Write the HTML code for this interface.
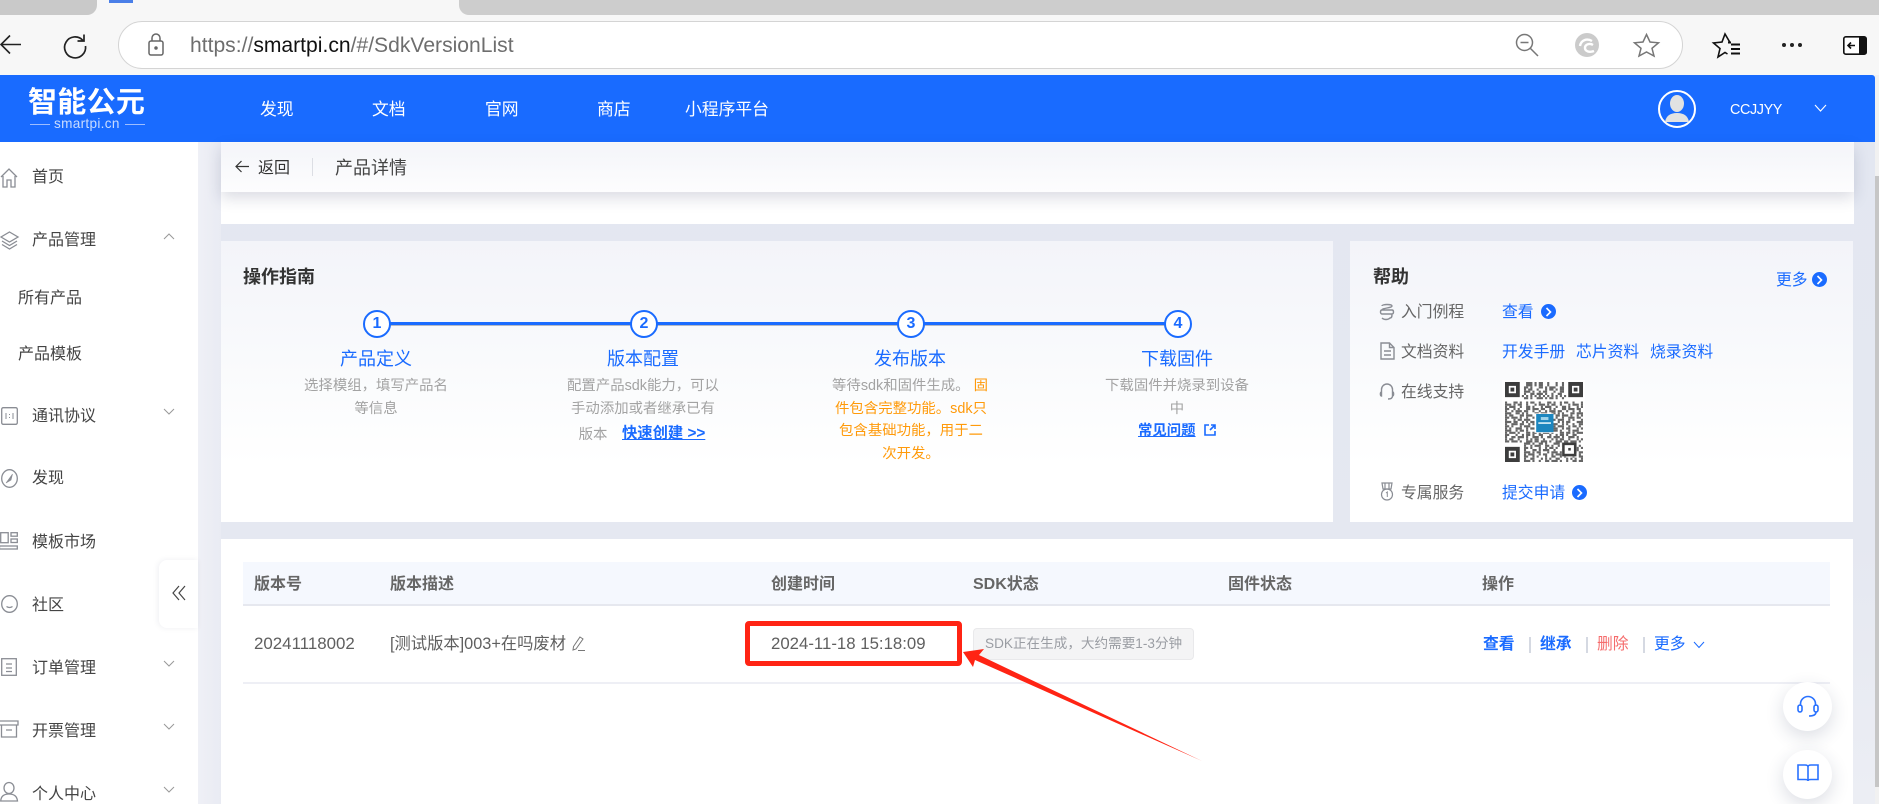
<!DOCTYPE html>
<html lang="zh"><head><meta charset="utf-8"><title>SdkVersionList</title>
<style>
*{box-sizing:border-box}
html,body{margin:0;padding:0;width:1879px;height:804px;overflow:hidden;background:#f7f7f7}
body{font-family:"Liberation Sans","Noto Sans CJK SC",sans-serif;position:relative;color:#333}
.a{position:absolute}
.t{position:absolute;white-space:nowrap;line-height:24px;height:24px}
.c{transform:translateX(-50%);font-size:14.4px;color:#a3a3a3}
.st{transform:translateX(-50%);font-size:18px;color:#1a6bff}
.o{color:#ff9a0a}
.b{color:#1a6bff}
.s{font-size:16px;color:#444}
.n{font-size:16.8px;color:#fff;top:98px}
.h{font-size:16px;color:#666;font-weight:700;top:573px}
.l{font-size:15.8px;color:#666}
.k{font-size:15.8px;color:#1a6bff}
.card{position:absolute;background:linear-gradient(180deg,#f3f4f9 0%,#fbfcfd 55%,#fff 80%)}
.step{position:absolute;top:310px;width:28px;height:28px;border:2.5px solid #1a6bff;border-radius:50%;background:#fff;color:#1a6bff;font-weight:700;font-size:16px;line-height:23px;text-align:center}
.dot{position:absolute;width:15px;height:15px;border-radius:50%;background:#1a6bff}
svg{position:absolute;overflow:visible}
.ic{fill:none;stroke:#8a8d94;stroke-width:1.3}
.sep{position:absolute;width:1.5px;background:#d5d9e2}
.fb{position:absolute;width:49px;height:49px;border-radius:50%;background:#fff;box-shadow:0 6px 18px rgba(40,50,90,.16)}
</style></head><body>

<!-- tab strip -->
<div class="a" style="left:0;top:0;width:97px;height:15px;background:#c9c9c9;border-radius:0 0 10px 0"></div>
<div class="a" style="left:109px;top:0;width:24px;height:3px;background:#4a7fe8"></div>
<div class="a" style="left:459px;top:0;width:1420px;height:15px;background:#cdcdcd;border-radius:0 0 0 10px"></div>

<!-- toolbar -->
<svg style="left:0;top:33px" width="24" height="24" viewBox="0 0 24 24" fill="none" stroke="#222" stroke-width="1.6"><path d="M21 11.5H1M10 2.5L1 11.5L10 20.5"/></svg>
<svg style="left:62px;top:33px" width="26" height="24" viewBox="0 0 26 24" fill="none" stroke="#222" stroke-width="1.7"><path d="M21 7.5A10.5 10.5 0 1 0 23.5 13M22 1.5V8H15.5"/></svg>
<div class="a" style="left:118px;top:21px;width:1565px;height:48px;border:1.5px solid #d4d4d4;border-radius:24px;background:#fff"></div>
<svg style="left:147px;top:33px" width="18" height="23" viewBox="0 0 18 23" fill="none" stroke="#666" stroke-width="1.5"><rect x="2" y="8" width="14" height="14" rx="2"/><path d="M5 8V5a4 4 0 0 1 8 0v3"/><circle cx="9" cy="15" r="1" fill="#666"/></svg>
<div class="t" style="left:190px;top:34px;font-size:21.1px;color:#6e6e6e">https://<span style="color:#111">smartpi.cn</span>/#/SdkVersionList</div>
<svg style="left:1515px;top:33px" width="24" height="24" viewBox="0 0 24 24" fill="none" stroke="#777" stroke-width="1.5"><circle cx="9.5" cy="9.5" r="8"/><path d="M15.5 15.5L23 23M5.5 9.5H13.5"/></svg>
<svg style="left:1574px;top:33px" width="26" height="24" viewBox="0 0 26 24"><circle cx="13" cy="12" r="12" fill="#cbcbcb"/><path d="M6 13C7 7 13 5 18 8M19 12C16 10 11 11 11 15C11 18 15 20 20 18" fill="none" stroke="#fff" stroke-width="2.4"/></svg>
<svg style="left:1633px;top:33px" width="27" height="24" viewBox="0 0 27 24" fill="none" stroke="#777" stroke-width="1.5"><path d="M13.5 1.5L17 9L25.5 9.8L19 15.3L21 23L13.5 19L6 23L8 15.3L1.5 9.8L10 9Z"/></svg>
<svg style="left:1712px;top:33px" width="29" height="25" viewBox="0 0 29 25" fill="none" stroke="#111" stroke-width="1.6"><path d="M18 9.5L13 1L10 9L1.5 10L8 15.5L6 24L13 19.5L15.5 21"/><path d="M16 9.5H19M19 11.5H28M19 16H28M19 20.5H28" stroke-width="2"/></svg>
<div class="a" style="left:1782px;top:43px;width:4px;height:4px;background:#222;border-radius:50%;box-shadow:8px 0 #222,16px 0 #222"></div>
<svg style="left:1843px;top:36px" width="24" height="19" viewBox="0 0 24 19"><rect x=".8" y=".8" width="22.4" height="17.4" rx="2" fill="#fff" stroke="#111" stroke-width="1.6"/><rect x="16" y="1" width="7" height="17" fill="#111"/><path d="M12 9.5H5M8 6.5L5 9.5L8 12.5" fill="none" stroke="#111" stroke-width="1.6"/></svg>

<!-- page bg -->
<div class="a" style="left:0;top:142px;width:1875px;height:662px;background:linear-gradient(180deg,#e3e7f1 0%,#e5e8f1 60%,#eceef4 100%)"></div>
<div class="a" style="left:198px;top:142px;width:23px;height:662px;background:linear-gradient(90deg,#eff0f6,#e9ebf3)"></div>
<!-- scrollbar -->
<div class="a" style="left:1875px;top:75px;width:4px;height:729px;background:#f1f1f1"></div>
<div class="a" style="left:1875px;top:176px;width:4px;height:611px;background:#c6c6c6"></div>

<!-- blue header -->
<div class="a" style="left:0;top:75px;width:1875px;height:67px;background:#196bff;border-radius:0 3px 0 0"></div>
<div class="t" style="left:28px;top:86px;height:34px;line-height:34px;font-size:29px;font-weight:700;color:#fff;letter-spacing:.3px">智能公元</div>
<div class="t" style="left:54px;top:112px;font-size:13.6px;color:#c9dcff;letter-spacing:.3px">smartpi.cn</div>
<div class="a" style="left:30px;top:124px;width:20px;height:1px;background:#9dbdff"></div>
<div class="a" style="left:125px;top:124px;width:20px;height:1px;background:#9dbdff"></div>
<div class="t n" style="left:260px">发现</div>
<div class="t n" style="left:372px">文档</div>
<div class="t n" style="left:485px">官网</div>
<div class="t n" style="left:597px">商店</div>
<div class="t n" style="left:685px">小程序平台</div>
<svg style="left:1658px;top:89px" width="38" height="40" viewBox="0 0 38 40"><circle cx="19" cy="20" r="18" fill="#196bff" stroke="#fff" stroke-width="2"/><ellipse cx="19" cy="14.5" rx="7" ry="8.5" fill="#e2e2e2"/><path d="M7 33C8 27 12 24 19 24S30 27 31 33Z" fill="#e2e2e2"/></svg>
<div class="t" style="left:1730px;top:98px;font-size:14.4px;color:#fff;letter-spacing:-.4px">CCJJYY</div>
<svg style="left:1814px;top:104px" width="13" height="8" viewBox="0 0 13 8" fill="none" stroke="#fff" stroke-width="1.1"><path d="M1 1L6.5 7L12 1"/></svg>

<!-- sidebar -->
<div class="a" style="left:0;top:142px;width:198px;height:662px;background:#fff"></div>
<svg class="ic" style="left:0;top:168px" width="18" height="20" viewBox="0 0 18 20"><path d="M1 9L9 1L17 9M3 8V19H7V12H11V19H15V8"/></svg>
<svg class="ic" style="left:0;top:230px" width="19" height="20" viewBox="0 0 19 20"><path d="M9.5 2L18 7L9.5 12L1 7ZM2 11L9.5 15.5L17 11M2 14.5L9.5 19L17 14.5"/></svg>
<svg class="ic" style="left:1px;top:407px" width="17" height="18" viewBox="0 0 17 18"><rect x=".7" y=".7" width="15.6" height="16.6" rx="1.5"/><path d="M5 6V12M12 6V12M8.5 7V8M8.5 10V11" stroke-width="1"/></svg>
<svg class="ic" style="left:1px;top:469px" width="17" height="19" viewBox="0 0 17 19"><ellipse cx="8.5" cy="9.5" rx="7.8" ry="8.8"/><path d="M5 14L11.5 5L10 11Z" fill="#8a8d94" stroke-width=".6"/></svg>
<svg class="ic" style="left:0;top:532px" width="18" height="18" viewBox="0 0 18 18"><rect x=".7" y=".7" width="7.5" height="10"/><rect x="11" y=".7" width="6.3" height="3.5"/><rect x="11" y="7" width="6.3" height="3.5"/><rect x="-.5" y="14" width="17.8" height="3"/></svg>
<svg class="ic" style="left:1px;top:595px" width="17" height="18" viewBox="0 0 17 18"><ellipse cx="8.5" cy="9" rx="7.8" ry="8.3"/><path d="M5.5 11.5Q8.5 13.5 11.5 11.5"/></svg>
<svg class="ic" style="left:1px;top:658px" width="16" height="18" viewBox="0 0 16 18"><rect x=".7" y=".7" width="14.6" height="16.6"/><path d="M5 6H11M5 10H11M5 13.5H11"/></svg>
<svg class="ic" style="left:0;top:720px" width="18" height="18" viewBox="0 0 18 18"><path d="M-1 1H18V5H-1M1.5 5V17H16.5V5M6 10H12"/></svg>
<svg class="ic" style="left:0;top:782px" width="19" height="20" viewBox="0 0 19 20"><ellipse cx="9" cy="6" rx="5" ry="5.5"/><path d="M.7 19C1 14 4 12 9 12S17 14 17.5 19Z"/></svg>
<div class="t s" style="left:32px;top:166px">首页</div>
<div class="t s" style="left:32px;top:229px">产品管理</div>
<div class="t s" style="left:18px;top:287px">所有产品</div>
<div class="t s" style="left:18px;top:343px">产品模板</div>
<div class="t s" style="left:32px;top:405px">通讯协议</div>
<div class="t s" style="left:32px;top:467px">发现</div>
<div class="t s" style="left:32px;top:531px">模板市场</div>
<div class="t s" style="left:32px;top:594px">社区</div>
<div class="t s" style="left:32px;top:657px">订单管理</div>
<div class="t s" style="left:32px;top:720px">开票管理</div>
<div class="t s" style="left:32px;top:783px">个人中心</div>
<svg style="left:163px;top:233px" width="12" height="7" viewBox="0 0 12 7" fill="none" stroke="#999" stroke-width="1"><path d="M1 6L6 1L11 6"/></svg>
<svg style="left:163px;top:408px" width="12" height="7" viewBox="0 0 12 7" fill="none" stroke="#999" stroke-width="1"><path d="M1 1L6 6L11 1"/></svg>
<svg style="left:163px;top:660px" width="12" height="7" viewBox="0 0 12 7" fill="none" stroke="#999" stroke-width="1"><path d="M1 1L6 6L11 1"/></svg>
<svg style="left:163px;top:723px" width="12" height="7" viewBox="0 0 12 7" fill="none" stroke="#999" stroke-width="1"><path d="M1 1L6 6L11 1"/></svg>
<svg style="left:163px;top:786px" width="12" height="7" viewBox="0 0 12 7" fill="none" stroke="#999" stroke-width="1"><path d="M1 1L6 6L11 1"/></svg>
<div class="a" style="left:159px;top:560px;width:39px;height:68px;background:#fff;border-radius:8px 0 0 8px;box-shadow:-1px 0 6px rgba(40,50,90,.08)"></div>
<svg style="left:172px;top:585px" width="14" height="16" viewBox="0 0 14 16" fill="none" stroke="#444" stroke-width="1.2"><path d="M7 1L1 8L7 15M13 1L7 8L13 15"/></svg>

<!-- top card -->
<div class="a" style="left:221px;top:142px;width:1633px;height:82px;background:#fff"></div>
<div class="a" style="left:221px;top:143px;width:1633px;height:49px;background:linear-gradient(180deg,#f4f5f9,#fdfdfe);box-shadow:0 6px 14px rgba(40,50,90,.17)"></div>
<svg style="left:235px;top:160px" width="14" height="13" viewBox="0 0 14 13" fill="none" stroke="#333" stroke-width="1.2"><path d="M14 6.5H1M6.5 1L1 6.5L6.5 12"/></svg>
<div class="t" style="left:258px;top:157px;font-size:16px;color:#333">返回</div>
<div class="a" style="left:312px;top:158px;width:1px;height:18px;background:#dcdee4"></div>
<div class="t" style="left:335px;top:156px;font-size:18px;color:#444">产品详情</div>

<!-- guide card -->
<div class="card" style="left:221px;top:241px;width:1112px;height:281px"></div>
<div class="t" style="left:243px;top:265px;font-size:18px;font-weight:700;color:#333">操作指南</div>
<div class="a" style="left:376px;top:324.5px;width:802px;height:1px;background:#b5b9c4"></div>
<div class="a" style="left:376px;top:322px;width:802px;height:2.5px;background:#1a6bff"></div>
<div class="step" style="left:363px">1</div>
<div class="step" style="left:630px">2</div>
<div class="step" style="left:897px">3</div>
<div class="step" style="left:1164px">4</div>
<div class="t st" style="left:376px;top:347px">产品定义</div>
<div class="t st" style="left:643px;top:347px">版本配置</div>
<div class="t st" style="left:910px;top:347px">发布版本</div>
<div class="t st" style="left:1177px;top:347px">下载固件</div>
<div class="t c" style="left:376px;top:374px">选择模组，填写产品名</div>
<div class="t c" style="left:376px;top:397px">等信息</div>
<div class="t c" style="left:643px;top:374px">配置产品sdk能力，可以</div>
<div class="t c" style="left:643px;top:397px">手动添加或者继承已有</div>
<div class="t c" style="left:593px;top:423px">版本</div>
<div class="t" style="left:622px;top:422px;font-size:15.3px;font-weight:700;color:#1a6bff;text-decoration:underline">快速创建 &gt;&gt;</div>
<div class="t c" style="left:910px;top:374px">等待sdk和固件生成。<span class="o"> 固</span></div>
<div class="t c o" style="left:911px;top:397px">件包含完整功能。sdk只</div>
<div class="t c o" style="left:911px;top:419px">包含基础功能，用于二</div>
<div class="t c o" style="left:911px;top:442px">次开发。</div>
<div class="t c" style="left:1177px;top:374px">下载固件并烧录到设备</div>
<div class="t c" style="left:1177px;top:397px">中</div>
<div class="t" style="left:1138px;top:419px;font-size:14.4px;font-weight:700;color:#1a6bff;text-decoration:underline">常见问题</div>
<svg style="left:1204px;top:424px" width="12" height="12" viewBox="0 0 12 12" fill="none" stroke="#1a6bff" stroke-width="1.6"><path d="M5 1H1V11H11V7M7 1H11V5M11 1L6 6"/></svg>

<!-- help card -->
<div class="card" style="left:1350px;top:241px;width:503px;height:281px"></div>
<div class="t" style="left:1373px;top:265px;font-size:18px;font-weight:700;color:#333">帮助</div>
<div class="t k" style="left:1776px;top:269px">更多</div>
<div class="dot" style="left:1812px;top:271.5px"></div>
<svg style="left:1816px;top:274.5px" width="7" height="10" viewBox="0 0 7 10" fill="none" stroke="#fff" stroke-width="1.6"><path d="M1.5 1L5.5 5L1.5 9"/></svg>
<svg class="ic" style="left:1379px;top:303px" width="16" height="18" viewBox="0 0 16 18"><path d="M3 3C3 1 13 1 13 3C13 5 3 5 3 7H13C15 7 15 11 13 11H3C1 11 1 7 3 7M13 11C13 13 13 15 11 15C9 17 5 17 3 15" stroke-width="1.4"/></svg>
<div class="t l" style="left:1401px;top:301px">入门例程</div>
<div class="t k" style="left:1502px;top:301px">查看</div>
<div class="dot" style="left:1540.5px;top:304px"></div>
<svg style="left:1544.5px;top:307px" width="7" height="10" viewBox="0 0 7 10" fill="none" stroke="#fff" stroke-width="1.6"><path d="M1.5 1L5.5 5L1.5 9"/></svg>
<svg class="ic" style="left:1380px;top:342px" width="15" height="18" viewBox="0 0 15 18"><path d="M1 1H9.5L14 5.5V17H1ZM9.5 1V5.5H14M4 9H11M4 13H11" stroke-width="1.4"/></svg>
<div class="t l" style="left:1401px;top:341px">文档资料</div>
<div class="t k" style="left:1502px;top:341px">开发手册</div>
<div class="t k" style="left:1576px;top:341px">芯片资料</div>
<div class="t k" style="left:1650px;top:341px">烧录资料</div>
<svg class="ic" style="left:1379px;top:383px" width="16" height="18" viewBox="0 0 16 18"><path d="M2.5 10V6.5A5.5 5.5 0 0 1 13.5 6.5V10M2.5 9C1 9 1 13 2.5 13ZM13.5 9C15 9 15 13 13.5 13ZM13.5 13C13.5 15 12 16 9 16" stroke-width="1.4"/></svg>
<div class="t l" style="left:1401px;top:381px">在线支持</div>
<!-- QR -->
<div class="a" style="left:1502px;top:380px;width:83px;height:84px;background:#fff"></div>
<svg style="left:1505px;top:382px" width="78" height="80" viewBox="0 0 37 37" preserveAspectRatio="none">
<g fill="none" stroke="#666" stroke-width="1">
<path stroke-dasharray="1 2 3 1 1 1 2 2 1 3" d="M9 .5H28M9 1.5H28" stroke-dashoffset="2"/>
<path stroke-dasharray="2 1 1 3 2 1 1 1 3 2" d="M9 2.5H28"/>
<path stroke-dasharray="1 1 2 2 1 3 1 1 2 1" d="M9 3.5H28"/>
<path stroke-dasharray="3 1 1 2 1 1 2 3 1 2" d="M9 4.5H28"/>
<path stroke-dasharray="1 2 2 1 3 1 1 2" d="M9 5.5H28"/>
<path stroke-dasharray="1 1" d="M8 6.5H29"/>
<path stroke-dasharray="2 1 1 2 3 1 1 1" d="M9 7.5H28"/>
<path stroke-dasharray="1 3 2 1 1 2 1 1 2 2" d="M0 9.5H37"/>
<path stroke-dasharray="3 1 1 1 2 2 1 3 1 1" d="M0 10.5H37"/>
<path stroke-dasharray="1 1 3 2 1 2 2 1 1 3" d="M0 11.5H37"/>
<path stroke-dasharray="2 2 1 1 1 3 2 1 3 1" d="M0 12.5H37"/>
<path stroke-dasharray="1 2 1 1 3 1 2 2 1 2" d="M0 13.5H37"/>
<path stroke-dasharray="3 2 2 1 1 1 1 3 2 1" d="M0 14.5H37"/>
<path stroke-dasharray="1 1 2 3 2 1 3 1 1 2" d="M0 15.5H37"/>
<path stroke-dasharray="2 1 3 1 1 2 1 2 3 1" d="M0 16.5H37"/>
<path stroke-dasharray="1 3 1 1 2 1 3 2 1 1" d="M0 17.5H37"/>
<path stroke-dasharray="3 1 2 2 1 1 1 1 2 3" d="M0 18.5H37"/>
<path stroke-dasharray="1 2 3 1 2 2 1 1 1 2" d="M0 19.5H37"/>
<path stroke-dasharray="2 1 1 3 1 1 3 2 1 1" d="M0 20.5H37"/>
<path stroke-dasharray="1 1 1 2 3 2 1 1 2 3" d="M0 21.5H37"/>
<path stroke-dasharray="3 2 1 1 2 1 1 3 1 1" d="M0 22.5H37"/>
<path stroke-dasharray="1 1 3 1 1 3 2 1 2 1" d="M0 23.5H37"/>
<path stroke-dasharray="2 3 1 2 1 1 2 1 1 2" d="M0 24.5H37"/>
<path stroke-dasharray="1 2 2 1 3 1 1 2 3 1" d="M0 25.5H37"/>
<path stroke-dasharray="1 1 2 2 1 3 1 1" d="M0 26.5H37"/>
<path stroke-dasharray="2 1 3 1 1 2 3 1" d="M0 27.5H37"/>
<path stroke-dasharray="3 1 1 2 2 1 1 3" d="M9 28.5H37"/>
<path stroke-dasharray="1 2 1 1 3 2 2 1" d="M9 29.5H37"/>
<path stroke-dasharray="2 1 1 3 1 2 1 1" d="M9 30.5H37"/>
<path stroke-dasharray="1 3 2 1 1 1 3 2" d="M9 31.5H37"/>
<path stroke-dasharray="3 1 1 1 2 3 1 1" d="M9 32.5H37"/>
<path stroke-dasharray="1 1 3 2 1 1 2 2" d="M9 33.5H37"/>
<path stroke-dasharray="2 2 1 1 1 3 1 2" d="M9 34.5H37"/>
<path stroke-dasharray="1 2 2 3 1 1 1 1" d="M9 35.5H37"/>
<path stroke-dasharray="3 1 1 2 1 2 2 1" d="M9 36.5H37"/>
</g>
<g fill="none" stroke="#3d3d3d">
<rect x=".9" y=".9" width="5.2" height="5.2" stroke-width="1.8"/>
<rect x="30.9" y=".9" width="5.2" height="5.2" stroke-width="1.8"/>
<rect x=".9" y="30.9" width="5.2" height="5.2" stroke-width="1.8"/>
</g>
<g fill="#3d3d3d"><rect x="2.6" y="2.6" width="1.8" height="1.8"/><rect x="32.6" y="2.6" width="1.8" height="1.8"/><rect x="2.6" y="32.6" width="1.8" height="1.8"/></g>
<rect x="27" y="28" width="7" height="6.5" fill="#fff"/>
<rect x="27.7" y="28.6" width="5.6" height="5.2" fill="none" stroke="#3d3d3d" stroke-width="1.2"/>
<rect x="30" y="30.5" width="1.2" height="1.2" fill="#3d3d3d"/>
<rect x="14" y="14.5" width="9" height="9" fill="#fff"/>
<rect x="14.8" y="14.8" width="8.2" height="8.4" fill="#1c86bf"/>
<rect x="17" y="16.2" width="3.6" height="1.4" fill="#9fd2ea"/>
<rect x="15.8" y="18.6" width="6" height=".8" fill="#cfe9f5"/>
</svg>
<svg class="ic" style="left:1380px;top:482px" width="14" height="19" viewBox="0 0 14 19"><path d="M2 1H12L11 7H3ZM5 1V7M9 1V7" stroke-width="1.2"/><circle cx="7" cy="12.5" r="5.5" stroke-width="1.2"/><path d="M6 11L7.3 10V15" stroke-width="1"/></svg>
<div class="t l" style="left:1401px;top:481.5px">专属服务</div>
<div class="t k" style="left:1502px;top:481.5px">提交申请</div>
<div class="dot" style="left:1572px;top:484.5px"></div>
<svg style="left:1576px;top:487.5px" width="7" height="10" viewBox="0 0 7 10" fill="none" stroke="#fff" stroke-width="1.6"><path d="M1.5 1L5.5 5L1.5 9"/></svg>

<!-- table card -->
<div class="a" style="left:221px;top:539px;width:1632px;height:265px;background:#fff"></div>
<div class="a" style="left:243px;top:562px;width:1587px;height:44px;background:#f5f8fe;border-bottom:2px solid #e6e8ef"></div>
<div class="a" style="left:243px;top:682px;width:1587px;height:1.5px;background:#eeeff5"></div>
<div class="t h" style="left:254px">版本号</div>
<div class="t h" style="left:390px">版本描述</div>
<div class="t h" style="left:771px">创建时间</div>
<div class="t h" style="left:973px">SDK状态</div>
<div class="t h" style="left:1228px">固件状态</div>
<div class="t h" style="left:1482px">操作</div>
<div class="t" style="left:254px;top:632px;font-size:16.9px;color:#5f5f5f">20241118002</div>
<div class="t" style="left:390px;top:632px;font-size:16.3px;color:#5f5f5f">[测试版本]003+在吗废材</div>
<svg style="left:571px;top:636px" width="15" height="15" viewBox="0 0 15 15" fill="none" stroke="#777" stroke-width="1"><path d="M9 1L12 3L5 13L2 14L2.5 10.5ZM7 14.5H14"/></svg>
<div class="t" style="left:771px;top:632px;font-size:16.8px;color:#5f5f5f">2024-11-18 15:18:09</div>
<div class="t" style="left:973px;top:628px;width:221px;height:32px;line-height:30px;background:#f4f4f5;border:1px solid #e9e9eb;border-radius:4px;padding-left:11px;font-size:13.6px;color:#9a9da3">SDK正在生成，大约需要1-3分钟</div>
<div class="t" style="left:1483px;top:633px;font-size:15.8px;font-weight:700;color:#1a6bff">查看</div>
<div class="sep" style="left:1529px;top:637px;height:16px"></div>
<div class="t" style="left:1540px;top:633px;font-size:15.8px;font-weight:700;color:#1a6bff">继承</div>
<div class="sep" style="left:1586px;top:637px;height:16px"></div>
<div class="t" style="left:1597px;top:633px;font-size:15.8px;color:#f56c6c">删除</div>
<div class="sep" style="left:1643px;top:637px;height:16px"></div>
<div class="t" style="left:1654px;top:633px;font-size:15.8px;color:#1a6bff">更多</div>
<svg style="left:1693px;top:641px" width="12" height="8" viewBox="0 0 12 8" fill="none" stroke="#1a6bff" stroke-width="1"><path d="M1 1L6 6.5L11 1"/></svg>

<!-- annotation -->
<div class="a" style="left:745px;top:621px;width:217px;height:45px;border:5px solid #ff2414;border-radius:4px"></div>
<svg style="left:0;top:0" width="1879" height="804" viewBox="0 0 1879 804"><path d="M963 652L984 649L979 655L1202 761L975 660L973 667Z" fill="#ff2414"/></svg>

<!-- floating -->
<div class="fb" style="left:1783px;top:682px"></div>
<svg style="left:1797px;top:695px" width="22" height="22" viewBox="0 0 22 22" fill="none" stroke="#2a72ff" stroke-width="1.6"><path d="M3.5 11V9A7.5 7.5 0 0 1 18.5 9V11"/><rect x="1" y="10" width="4" height="7" rx="2"/><rect x="17" y="10" width="4" height="7" rx="2"/><path d="M19 17C19 20 16 21 12 21"/></svg>
<div class="fb" style="left:1783px;top:750px"></div>
<svg style="left:1797px;top:763px" width="22" height="20" viewBox="0 0 22 20" fill="none" stroke="#2a72ff" stroke-width="1.6"><path d="M1 2H8Q11 2 11 4V18Q11 16.5 8 16.5H1ZM21 2H14Q11 2 11 4V18Q11 16.5 14 16.5H21Z"/></svg>
</body></html>
